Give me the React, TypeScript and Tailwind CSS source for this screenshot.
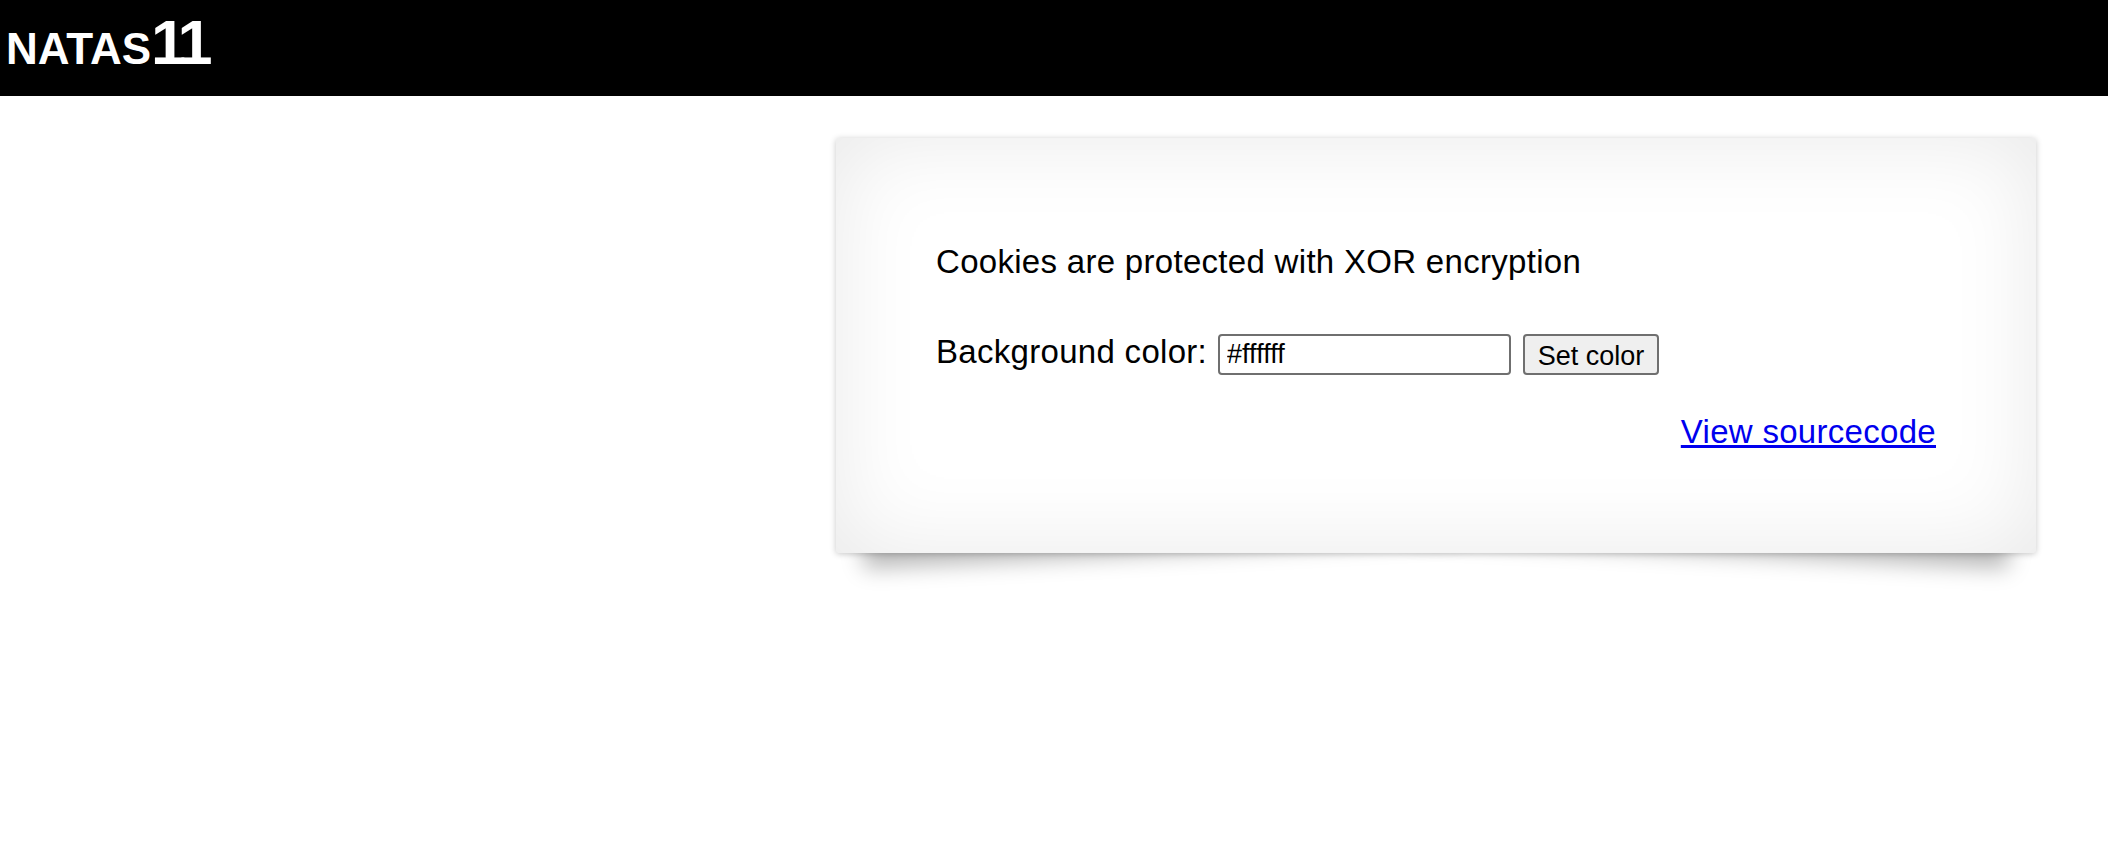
import React from 'react';

const font = { fontFamily: '"Liberation Sans", Arial, sans-serif' };

export default function App() {
  return (
    <div className="min-h-[868px] bg-white text-black" style={font}>
      {/* page header */}
      <div className="h-[96px] bg-black pl-[6px] pt-[11px]">
        <h1 className="text-[63px] leading-none font-bold text-white [font-variant-caps:small-caps]">
          natas<span className="tracking-[-5px]">11</span>
        </h1>
      </div>

      {/* content card with lifted shadow */}
      <div className="relative ml-[836px] mt-[42px] w-[1200px] h-[415px]">
        <div className="absolute bottom-[28px] left-[24px] w-1/2 max-w-[600px] h-[20%] -rotate-3 shadow-[0_28px_22px_rgba(0,0,0,0.28)]" />
        <div className="absolute bottom-[28px] right-[24px] w-1/2 max-w-[600px] h-[20%] rotate-3 shadow-[0_28px_22px_rgba(0,0,0,0.28)]" />

        <div className="relative z-10 h-full bg-white rounded-[3px] p-[100px] tracking-[0.3px] shadow-[0_1px_6px_rgba(0,0,0,0.22),inset_0_0_90px_rgba(0,0,0,0.09)]">
          <div className="text-[33px] leading-[48px]">Cookies are protected with XOR encryption</div>

          <form className="mt-[42px] flex items-start" onSubmit={(e) => e.preventDefault()}>
            <span className="mt-[5px] text-[33px] leading-[37px]">Background color:</span>
            <input
              type="text"
              defaultValue="#ffffff"
              className="ml-[11px] mt-[6px] h-[41px] w-[293px] rounded-[4px] border-2 border-[#6f6f6f] bg-white px-[7px] text-[27px] tracking-normal text-black outline-none"
            />
            <button
              type="submit"
              className="ml-[12px] mt-[6px] h-[41px] w-[136px] rounded-[4px] border-2 border-[#6f6f6f] bg-[#efefef] text-[27px] tracking-normal text-black"
            >
              Set color
            </button>
          </form>

          <div className="mt-[38px] text-right text-[33px] leading-[37px]">
            <a href="#" className="text-[#0000ee] underline">
              View sourcecode
            </a>
          </div>
        </div>
      </div>
    </div>
  );
}
